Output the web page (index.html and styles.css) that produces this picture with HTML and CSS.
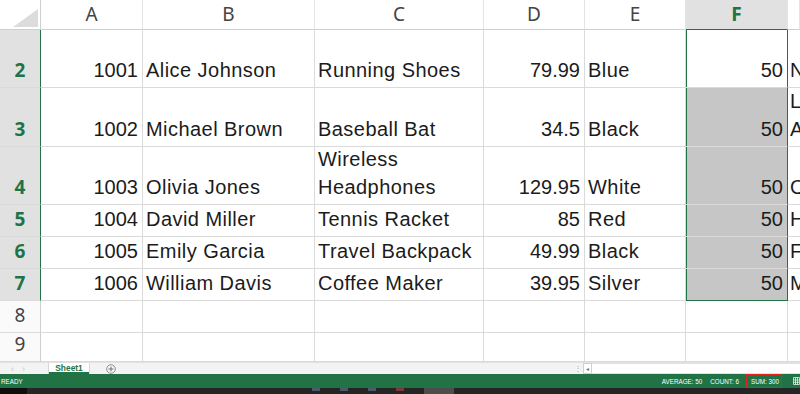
FILE: index.html
```html
<!DOCTYPE html>
<html>
<head>
<meta charset="utf-8">
<link rel="stylesheet" href="styles.css">
</head>
<body>
<div class="app">
  <div class="sheet">
    <div class="corner"><div class="tri"></div></div>
    <div class="ch">A</div><div class="ch">B</div><div class="ch">C</div><div class="ch">D</div><div class="ch">E</div><div class="ch sel">F</div><div class="ch"></div>

    <div class="rh sel">2</div>
    <div class="c num">1001</div><div class="c">Alice Johnson</div><div class="c">Running Shoes</div><div class="c num">79.99</div><div class="c">Blue</div><div class="c num f">50</div><div class="c g">N</div>

    <div class="rh sel">3</div>
    <div class="c num">1002</div><div class="c">Michael Brown</div><div class="c">Baseball Bat</div><div class="c num">34.5</div><div class="c">Black</div><div class="c num f fill">50</div><div class="c g"><span>L<br>A</span></div>

    <div class="rh sel">4</div>
    <div class="c num">1003</div><div class="c">Olivia Jones</div><div class="c"><span>Wireless<br>Headphones</span></div><div class="c num">129.95</div><div class="c">White</div><div class="c num f fill">50</div><div class="c g">O</div>

    <div class="rh sel">5</div>
    <div class="c num">1004</div><div class="c">David Miller</div><div class="c">Tennis Racket</div><div class="c num">85</div><div class="c">Red</div><div class="c num f fill">50</div><div class="c g">H</div>

    <div class="rh sel">6</div>
    <div class="c num">1005</div><div class="c">Emily Garcia</div><div class="c">Travel Backpack</div><div class="c num">49.99</div><div class="c">Black</div><div class="c num f fill">50</div><div class="c g">F</div>

    <div class="rh sel">7</div>
    <div class="c num">1006</div><div class="c">William Davis</div><div class="c">Coffee Maker</div><div class="c num">39.95</div><div class="c">Silver</div><div class="c num f fill last">50</div><div class="c g">M</div>

    <div class="rh">8</div>
    <div class="c"></div><div class="c"></div><div class="c"></div><div class="c"></div><div class="c"></div><div class="c"></div><div class="c g"></div>

    <div class="rh">9</div>
    <div class="c"></div><div class="c"></div><div class="c"></div><div class="c"></div><div class="c"></div><div class="c"></div><div class="c g"></div>
  </div>

  <div class="tabs">
    <div class="nav"><span>&#8249;</span><span>&#8250;</span></div>
    <div class="tab">Sheet1</div>
    <div class="add">
      <svg width="10" height="10" viewBox="0 0 10 10"><circle cx="5" cy="5" r="4.3" fill="none" stroke="#777" stroke-width="0.8"/><path d="M5 2.6v4.8M2.6 5h4.8" stroke="#666" stroke-width="0.9"/></svg>
    </div>
    <div class="spacer"></div>
    <div class="split">&#8942;</div>
    <div class="sbtn">&#9666;</div>
    <div class="track"></div>
  </div>

  <div class="status">
    <div class="ready">READY</div>
    <div class="spacer"></div>
    <div class="stat avg">AVERAGE: 50</div>
    <div class="stat count">COUNT: 6</div>
    <div class="stat sum">SUM: 300</div>
    <div class="view">
      <svg width="7" height="8" viewBox="0 0 7 8"><path d="M0.5 0.5h6v7h-6zM0.5 3h6M0.5 5.3h6M2.5 0.5v7M4.5 0.5v7" fill="none" stroke="#fff" stroke-width="0.7"/></svg>
    </div>
  </div>

  <div class="taskbar">
    <div class="start"></div>
    <div class="tb-icons">
      <span class="ti"></span><span class="ti"></span><span class="ti"></span><span class="ti red"></span>
      <span class="ti active"></span>
    </div>
  </div>
</div>
</body>
</html>
```

FILE: styles.css
```css
* { box-sizing: border-box; }
html, body { margin: 0; padding: 0; background: #fff; }
.app {
  width: 800px;
  height: 394px;
  overflow: hidden;
  display: flex;
  flex-direction: column;
}
.sheet {
  display: grid;
  grid-template-columns: 41px 102px 172px 169px 101px 101px 102px 1fr;
  grid-template-rows: 30px 58px 59px 58px 32px 32px 32px 32px 29px;
  height: 362px;
  flex: none;
}
.corner {
  border-right: 1px solid #cfcfcf;
  border-bottom: 1px solid #cfcfcf;
  display: flex;
  justify-content: flex-end;
  align-items: flex-end;
  padding: 0 2px 2px 0;
}
.tri {
  width: 25px;
  height: 18px;
  background: #dcdcdc;
  clip-path: polygon(100% 0, 100% 100%, 0 100%);
}
.ch {
  border-right: 1px solid #e4e4e4;
  border-bottom: 1px solid #cfcfcf;
  display: flex;
  align-items: center;
  justify-content: center;
  font: 400 19px "Noto Sans", "Open Sans", sans-serif;
  color: #444;
  padding-bottom: 1px;
}
.ch.sel {
  background: #e1e1e1;
  color: #217346;
  font-weight: 700;
  border-bottom-color: #217346;
}
.rh {
  border-right: 1px solid #cfcfcf;
  border-bottom: 1px solid #dadada;
  display: flex;
  align-items: flex-end;
  justify-content: center;
  font: 400 19px/28px "Noto Sans", "Open Sans", sans-serif;
  color: #444;
  padding-bottom: 3px;
  background: #fafafa;
}
.rh.sel {
  background: #e1e1e1;
  color: #217346;
  font-weight: 700;
  border-right-color: #217346;
}
.c {
  border-right: 1px solid #dadada;
  border-bottom: 1px solid #dadada;
  display: flex;
  align-items: flex-end;
  padding: 0 3px 3px 3px;
  font: 20px/28px "Liberation Sans", Arial, sans-serif;
  letter-spacing: 0.45px;
  color: #1b1b1b;
  white-space: nowrap;
  overflow: hidden;
}
.c.num {
  justify-content: flex-end;
  padding-right: 4px;
  letter-spacing: 0;
}
.c.f {
  border-right-color: #217346;
  box-shadow: inset 1px 0 0 #217346;
}
.c.fill { background: #c6c6c6; }
.c.last { border-bottom-color: #217346; }
.c.g {
  border-right: none;
  padding-left: 2px;
}

.tabs {
  height: 12px;
  flex: none;
  display: flex;
  align-items: stretch;
  background: #f3f3f3;
  border-top: 1px solid #e2e2e2;
  font-family: "Liberation Sans", Arial, sans-serif;
}
.nav {
  width: 49px;
  display: flex;
  align-items: center;
  gap: 8px;
  padding-left: 11px;
  color: #c4c4c4;
  font-size: 9px;
  line-height: 10px;
}
.tab {
  width: 40px;
  background: #fff;
  border-bottom: 2px solid #217346;
  color: #217346;
  font-weight: 700;
  font-size: 8.4px;
  display: flex;
  align-items: center;
  justify-content: center;
  box-shadow: 1px 0 0 #d6d6d6, -1px 0 0 #d6d6d6;
}
.add {
  width: 27px;
  display: flex;
  align-items: center;
  justify-content: flex-end;
}
.spacer { flex: 1; }
.split {
  width: 10px;
  color: #aaa;
  font-size: 8px;
  line-height: 11px;
  text-align: center;
}
.sbtn {
  width: 9px;
  border: 1px solid #d0d0d0;
  background: #fff;
  color: #777;
  font-size: 6px;
  display: flex;
  align-items: center;
  justify-content: center;
}
.track {
  width: 208px;
  background: #fff;
  border-top: 1px solid #e0e0e0;
  border-bottom: 1px solid #e0e0e0;
}

.status {
  height: 14px;
  flex: none;
  background: #217346;
  color: #fff;
  display: flex;
  align-items: center;
  font: 6.3px "Liberation Sans", Arial, sans-serif;
}
.ready { padding-left: 1px; }
.stat { white-space: nowrap; }
.avg { margin-right: 8px; }
.count { margin-right: 7px; }
.sum {
  border: 1.5px solid #e0261f;
  width: 36px;
  height: 14px;
  display: flex;
  align-items: center;
  padding: 0 0 0 4px;
}
.view {
  width: 18px;
  display: flex;
  justify-content: flex-end;
  align-items: center;
}

.taskbar {
  flex: 1;
  background: #252525;
  display: flex;
}
.start { width: 27px; background: #0e0e0e; }
.tb-icons {
  display: flex;
  gap: 20px;
  padding-left: 285px;
  align-items: flex-start;
}
.ti {
  width: 8px;
  height: 3px;
  background: #4a5a6a;
}
.ti.red { background: #7a3a3a; }
.ti.active {
  width: 30px;
  height: 6px;
  background: #4d4d4d;
}
```
